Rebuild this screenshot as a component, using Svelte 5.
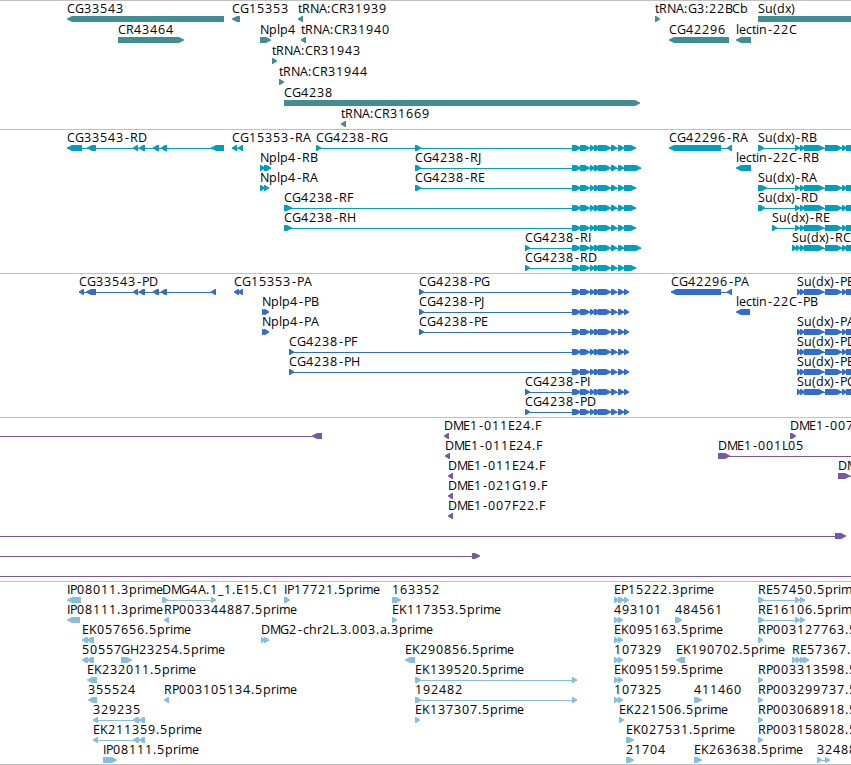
<script lang="ts">
  // [start, end] of each block, in canvas pixels
  type Block = [number, number];

  interface Feature {
    row: number;
    label: string;
    dir: 1 | -1;
    blocks: Block[];
    // connector range when it runs past the blocks
    line?: Block;
  }

  interface Track {
    name: string;
    height: number;
    pitch: number;
    features: Feature[];
  }

  const WIDTH = 851;
  const HEAD = 5;

  // whole-pixel glyph advances, digits and anything unlisted take 8
  const ADVANCE: Record<string, number> = {
    G: 9, N: 9, D: 9, H: 9, M: 10, P: 7, E: 7, F: 7, B: 7, S: 7, L: 6, J: 4, I: 3,
    "-": 6, _: 6, ".": 4, ":": 4, "(": 4, ")": 4,
    a: 7, c: 6, e: 7, i: 3, l: 3, m: 11, r: 5, t: 4, x: 6,
  };

  function f(row: number, label: string, dir: 1 | -1, blocks: Block[], line?: Block): Feature {
    return { row, label, dir, blocks, line };
  }

  function cg4238(first: Block[], end: number): Block[] {
    return [
      ...first,
      [572, 581], [580, 590], [590, 595], [594, 600], [598, 611],
      [611, 617], [618, 624], [624, end],
    ];
  }

  function sudx(first: Block[]): Block[] {
    return [...first, [800, 805], [804, 824], [825, 842], [842, 847], [846, 858]];
  }

  const pair: Block[] = [[614, 619], [618, 623]];

  const tracks: Track[] = [
    {
      name: "gene",
      height: 128,
      pitch: 21,
      features: [
        f(0, "CG33543", -1, [[67, 224]]),
        f(0, "CG15353", -1, [[232, 240]]),
        f(0, "tRNA:CR31939", -1, [[298, 303]]),
        f(0, "tRNA:G3:22BCb", 1, [[655, 660]]),
        f(0, "Su(dx)", 1, [[758, 870]]),
        f(1, "CR43464", 1, [[118, 184]]),
        f(1, "Nplp4", 1, [[260, 271]]),
        f(1, "tRNA:CR31940", -1, [[301, 306]]),
        f(1, "CG42296", -1, [[669, 729]]),
        f(1, "lectin-22C", -1, [[736, 751]]),
        f(2, "tRNA:CR31943", 1, [[272, 277]]),
        f(3, "tRNA:CR31944", 1, [[279, 284]]),
        f(4, "CG4238", 1, [[284, 640]]),
        f(5, "tRNA:CR31669", -1, [[341, 346]]),
      ],
    },
    {
      name: "transcript",
      height: 143,
      pitch: 20,
      features: [
        f(0, "CG33543-RD", -1, [[67, 82], [87, 96], [133, 138], [139, 145], [153, 159], [161, 167], [211, 224]]),
        f(0, "CG15353-RA", -1, [[232, 237], [238, 243]]),
        f(0, "CG4238-RG", 1, cg4238([[316, 321], [415, 421]], 636)),
        f(0, "CG42296-RA", -1, [[669, 721], [727, 732]]),
        f(0, "Su(dx)-RB", 1, sudx([[758, 764], [795, 800]])),
        f(1, "Nplp4-RB", 1, [[260, 265], [264, 271]]),
        f(1, "CG4238-RJ", 1, cg4238([[415, 421]], 641)),
        f(1, "lectin-22C-RB", -1, [[736, 751]]),
        f(2, "Nplp4-RA", 1, [[260, 265], [264, 269]]),
        f(2, "CG4238-RE", 1, cg4238([[415, 421]], 636)),
        f(2, "Su(dx)-RA", 1, sudx([[758, 767], [795, 800]])),
        f(3, "CG4238-RF", 1, cg4238([[284, 292]], 636)),
        f(3, "Su(dx)-RD", 1, sudx([[758, 765], [795, 800]])),
        f(4, "CG4238-RH", 1, cg4238([[284, 292]], 636)),
        f(4, "Su(dx)-RE", 1, sudx([[772, 777], [795, 800]])),
        f(5, "CG4238-RI", 1, cg4238([[525, 530]], 641)),
        f(5, "Su(dx)-RC", 1, sudx([[792, 797], [796, 800]])),
        f(6, "CG4238-RD", 1, cg4238([[525, 530]], 636)),
      ],
    },
    {
      name: "protein",
      height: 143,
      pitch: 20,
      features: [
        f(0, "CG33543-PD", -1, [[79, 84], [86, 96], [133, 138], [139, 145], [153, 159], [161, 167], [211, 216]]),
        f(0, "CG15353-PA", -1, [[234, 239], [238, 243]]),
        f(0, "CG4238-PG", 1, cg4238([[419, 424]], 629)),
        f(0, "CG42296-PA", -1, [[671, 721], [727, 732]]),
        f(0, "Su(dx)-PB", 1, sudx([[797, 801]])),
        f(1, "Nplp4-PB", 1, [[262, 266], [264, 269]]),
        f(1, "CG4238-PJ", 1, cg4238([[419, 424]], 629)),
        f(1, "lectin-22C-PB", -1, [[736, 750]]),
        f(2, "Nplp4-PA", 1, [[262, 266], [264, 269]]),
        f(2, "CG4238-PE", 1, cg4238([[419, 424]], 629)),
        f(2, "Su(dx)-PA", 1, sudx([[797, 801]])),
        f(3, "CG4238-PF", 1, cg4238([[289, 294]], 629)),
        f(3, "Su(dx)-PD", 1, sudx([[797, 801]])),
        f(4, "CG4238-PH", 1, cg4238([[289, 294]], 629)),
        f(4, "Su(dx)-PE", 1, sudx([[797, 801]])),
        f(5, "CG4238-PI", 1, cg4238([[525, 530]], 629)),
        f(5, "Su(dx)-PC", 1, sudx([[797, 801]])),
        f(6, "CG4238-PD", 1, cg4238([[525, 530]], 629)),
      ],
    },
    {
      name: "clone",
      height: 163,
      pitch: 20,
      features: [
        f(0, "", -1, [[312, 322]], [0, 312]),
        f(0, "DME1-011E24.F", -1, [[444, 449]]),
        f(0, "DME1-007", 1, [[790, 796]]),
        f(1, "DME1-011E24.F", -1, [[445, 450]]),
        f(1, "DME1-001L05", 1, [[718, 730]], [718, WIDTH]),
        f(2, "DME1-011E24.F", -1, [[448, 453]]),
        f(2, "DM", 1, [[838, 850]], [838, WIDTH]),
        f(3, "DME1-021G19.F", -1, [[448, 453]]),
        f(4, "DME1-007F22.F", -1, [[448, 453]]),
        f(5, "", 1, [[835, 846]], [0, 835]),
        f(6, "", 1, [[472, 480]], [0, 472]),
        f(7, "", 1, [], [0, WIDTH]),
      ],
    },
    {
      name: "est",
      height: 182,
      pitch: 20,
      features: [
        f(0, "IP08011.3prime", -1, [[67, 81]]),
        f(0, "DMG4A.1_1.E15.C1", 1, [[162, 168], [211, 216]]),
        f(0, "IP17721.5prime", 1, [[284, 290]]),
        f(0, "163352", 1, [[392, 401]]),
        f(0, "EP15222.3prime", 1, [[614, 619], [618, 624], [624, 629]]),
        f(0, "RE57450.5prime", 1, [[758, 764], [795, 800], [800, 805]]),
        f(1, "IP08111.3prime", -1, [[67, 80]]),
        f(1, "RP003344887.5prime", -1, [[164, 169]]),
        f(1, "EK117353.5prime", 1, [[392, 397]]),
        f(1, "493101", 1, pair),
        f(1, "484561", 1, [[675, 682]]),
        f(1, "RE16106.5prime", 1, [[758, 764], [795, 800], [800, 805]]),
        f(2, "EK057656.5prime", -1, [[82, 88], [87, 94]]),
        f(2, "DMG2-chr2L.3.003.a.3prime", 1, [[261, 265], [264, 269]]),
        f(2, "EK095163.5prime", 1, pair),
        f(2, "RP003127763.5", 1, [[758, 763]]),
        f(3, "50557", -1, [[82, 88], [87, 94]]),
        f(3, "GH23254.5prime", 1, [[121, 132]]),
        f(3, "EK290856.5prime", -1, [[405, 415]]),
        f(3, "107329", 1, pair),
        f(3, "EK190702.5prime", -1, [[676, 685]]),
        f(3, "RE57367.", 1, [[792, 797], [796, 801], [800, 805], [803, 809]]),
        f(4, "EK232011.5prime", -1, [[87, 97]]),
        f(4, "EK139520.5prime", 1, [[415, 421], [572, 577]]),
        f(4, "EK095159.5prime", 1, pair),
        f(4, "RP003313598.5", 1, [[758, 763]]),
        f(5, "355524", -1, [[88, 97]]),
        f(5, "RP003105134.5prime", -1, [[164, 169]]),
        f(5, "192482", 1, [[415, 421], [572, 577]]),
        f(5, "107325", 1, pair),
        f(5, "411460", 1, [[694, 702]]),
        f(5, "RP003299737.5", 1, [[758, 763]]),
        f(6, "329235", -1, [[93, 98], [133, 139], [139, 145]]),
        f(6, "EK137307.5prime", 1, [[415, 420]]),
        f(6, "EK221506.5prime", 1, [[619, 624]]),
        f(6, "RP003068918.5", 1, [[758, 763]]),
        f(7, "EK211359.5prime", -1, [[93, 98], [133, 139], [139, 145]]),
        f(7, "EK027531.5prime", 1, [[626, 634]]),
        f(7, "RP003158028.5", 1, [[758, 763]]),
        f(8, "IP08111.5prime", 1, [[103, 117]]),
        f(8, "21704", 1, [[626, 634]]),
        f(8, "EK263638.5prime", 1, [[694, 702]]),
        f(8, "32488", 1, [[817, 822], [825, 830]]),
      ],
    },
  ];

  function glyphX(feature: Feature): string {
    let x = feature.blocks[0][0];
    return [...feature.label]
      .map((ch) => {
        const at = ch === "-" ? x + 1 : x;
        x += ADVANCE[ch] ?? 8;
        return at;
      })
      .join(" ");
  }

  function arrow([x1, x2]: Block, dir: 1 | -1): string {
    const head = Math.min(HEAD, x2 - x1);
    const tip = dir > 0 ? x2 : x1;
    const back = dir > 0 ? x1 : x2;
    const neck = tip - dir * head;
    if (x2 - x1 < 8) {
      const side = neck + dir;
      return `M${back} 0H${side}L${tip} 2.5V3.5L${side} 6H${back}Z`;
    }
    // long blocks get a rounder nose
    const mid = tip - dir * 2;
    return `M${back} 0H${neck}L${mid} 1.5L${tip} 2.5V3.5L${mid} 4.5L${neck} 6H${back}Z`;
  }

  function connector(feature: Feature): Block {
    if (feature.line) return feature.line;
    return [feature.blocks[0][0], feature.blocks[feature.blocks.length - 1][1]];
  }
</script>

<main class="viewer">
  {#each tracks as track (track.name)}
    <section class={`track ${track.name}`}>
      <svg width={WIDTH} height={track.height}>
        {#each track.features as feature}
          {@const [from, to] = connector(feature)}
          <g transform={`translate(0 ${15 + feature.row * track.pitch})`}>
            {#if feature.line || feature.blocks.length > 1}
              <rect x={from} y="3" width={to - from} height="1" />
            {/if}
            {#each feature.blocks as block}
              <path d={arrow(block, feature.dir)} />
            {/each}
            {#if feature.label}
              <text x={glyphX(feature)} y="-3">{feature.label}</text>
            {/if}
          </g>
        {/each}
      </svg>
    </section>
  {/each}
</main>

<style>
  :global(body) {
    background: #fff;
  }

  .viewer {
    display: flex;
    flex-direction: column;
    width: 851px;
    height: 765px;
    overflow: hidden;
    background: #fff;
  }

  .track {
    flex: none;
    border-top: 1px solid #c0c0c0;
  }

  .track:last-child {
    border-bottom: 1px solid #c0c0c0;
  }

  svg {
    display: block;
    overflow: hidden;
  }

  text {
    font-family: "Open Sans", "Noto Sans", sans-serif;
    font-size: 12.5px;
    fill: #000;
  }

  .gene {
    fill: #408e94;
  }

  .transcript {
    fill: #009fc1;
  }

  .protein {
    fill: #316dce;
  }

  .clone {
    fill: #7657a8;
  }

  .est {
    fill: #87bddf;
  }
</style>
